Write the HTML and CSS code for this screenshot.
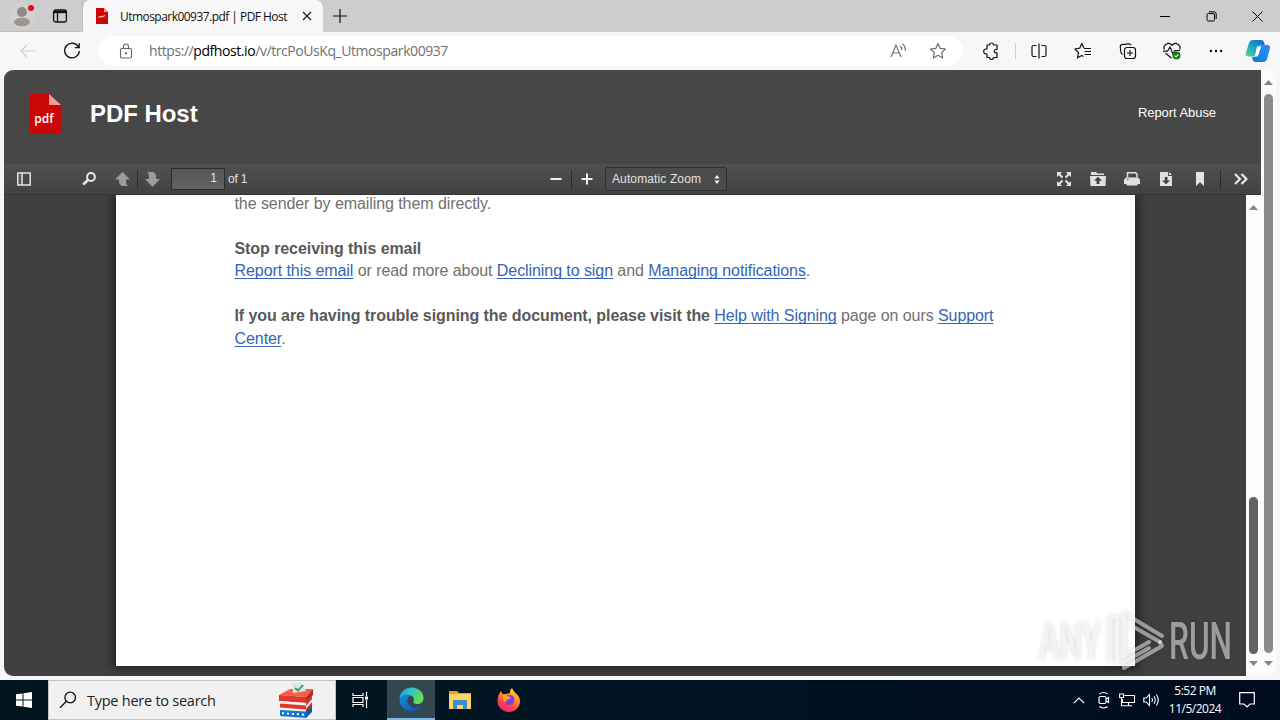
FILE: index.html
```html
<!DOCTYPE html>
<html lang="en">
<head>
<meta charset="UTF-8" />
<meta name="viewport" content="width=device-width, initial-scale=1" />
<title>Utmospark00937.pdf | PDF Host</title>
<link rel="stylesheet" href="styles.css">
</head>
<body>

<!-- tab strip -->
<div class="titlebar">
  <div class="tab-tools">
    <svg class="profile" width="28" height="28" viewBox="0 0 28 28">
      <circle cx="14" cy="14" r="13" fill="#d3d0ce"/>
      <circle cx="14" cy="10" r="5" fill="#8e8b89"/>
      <ellipse cx="14" cy="20" rx="8" ry="4.3" fill="#999694"/>
      <circle cx="23" cy="6" r="3" fill="#e00b1c"/>
    </svg>
    <svg class="workspaces" width="16" height="16" viewBox="0 0 16 16" fill="none" stroke="#111" stroke-width="1.3">
      <rect x="1.6" y="2" width="12.8" height="12" rx="2"/>
      <path d="M2 3.3h12M5.5 5v9" />
      <path d="M2 4.2h12" stroke-width="2"/>
    </svg>
  </div>
  <div class="tab">
    <svg width="14" height="16" viewBox="0 0 14 16">
      <path d="M1 0h8l4 4v12H1z" fill="#cb0606"/>
      <path d="M9 0l4 4H9z" fill="#f79a9a"/>
      <path d="M3.5 9.500l2-1 1.500.3 3-1.300" stroke="#fbb" stroke-width="1.200" fill="none"/>
    </svg>
    <span class="tab-title">Utmospark00937.pdf | PDF Host</span>
    <svg class="tab-close" width="10" height="10" viewBox="0 0 10 10" stroke="#222" stroke-width="1.3"><path d="M1 1l8 8M9 1L1 9"/></svg>
  </div>
  <svg class="new-tab" width="14" height="14" viewBox="0 0 14 14" stroke="#111" stroke-width="1.2"><path d="M7 0v14M0 7h14"/></svg>
  <div class="window-controls">
    <span><svg width="10" height="10" viewBox="0 0 10 10" stroke="#000"><path d="M0 5.5h10"/></svg></span>
    <span><svg width="11" height="11" viewBox="0 0 11 11" fill="none" stroke="#000"><rect x="1" y="2.5" width="7.5" height="7.5" rx="1.5"/><path d="M3 .8h5a2.2 2.2 0 0 1 2.2 2.2v5"/></svg></span>
    <span><svg width="11" height="11" viewBox="0 0 11 11" stroke="#000"><path d="M.5.5l10 10M10.500 .5l-10 10"/></svg></span>
  </div>
</div>

<!-- address bar -->
<div class="navbar">
  <div class="nav-buttons">
    <span><svg width="16" height="14" viewBox="0 0 16 14" fill="none" stroke="#cfcfcf" stroke-width="1.1"><path d="M7 1L1 7l6 6M1 7h15"/></svg></span>
    <span><svg width="18" height="18" viewBox="0 0 18 18" fill="none" stroke="#1b1b1b" stroke-width="1.4"><path d="M15.500 5.200A7.300 7.300 0 1 0 16.300 9M16.200 1.300v4.300h-4.400"/></svg></span>
  </div>
  <div class="address">
    <svg class="lock" width="14" height="16" viewBox="0 0 14 16" fill="none" stroke="#666" stroke-width="1.1"><rect x="1.500" y="5.500" width="11" height="9.500" rx="1.500"/><path d="M4.500 5.500V3.500a2.500 2.500 0 0 1 5 0v2"/><circle cx="7" cy="10.300" r=".6" fill="#666"/></svg>
    <span class="url"><span class="url-part scheme">https://</span><span class="url-part domain">pdfhost.io</span><span class="url-part path">/v/trcPoUsKq_Utmospark00937</span></span>
    <svg class="read-aloud" width="17" height="16" viewBox="0 0 17 16" fill="none" stroke="#707070" stroke-width="1.200"><path d="M1 14L6 2l5 12M2.700 10h6.600M10.300 3q1.800 1.500 1.300 4M12.300 .7q3.500 2.500 2.800 7"/></svg>
    <svg class="star" width="18" height="18" viewBox="0 0 18 18" fill="none" stroke="#666" stroke-width="1.100" stroke-linejoin="round"><path d="M9 1.500l2.200 4.900 5.300.6-3.900 3.600 1.100 5.300L9 13.200l-4.700 2.700 1.100-5.300L1.500 7l5.300-.6z"/></svg>
  </div>
  <div class="nav-tools">
    <span class="ext"><svg width="18" height="18" viewBox="0 0 18 18" fill="none" stroke="#111" stroke-width="1.200" stroke-linejoin="round"><path d="M5 3h2.500a2 2 0 0 1 4 0H15v4.500h-1a1.700 1.700 0 0 0 0 3.400h1V15.500h-3.500a2 2 0 0 1-4 0H5V12H4.200a2.500 2.500 0 1 1 0-5H5z"/></svg></span>
    <i class="divider"></i>
    <span><svg width="18" height="18" viewBox="0 0 18 18" fill="none" stroke="#111" stroke-width="1.200"><path d="M6.500 3.500h-3q-1.500 0-1.500 1.500v8q0 1.500 1.500 1.500h3M11.500 3.500h3q1.500 0 1.500 1.500v8q0 1.500-1.500 1.500h-3M9 1.500v15"/></svg></span>
    <span><svg width="18" height="18" viewBox="0 0 18 18" fill="none" stroke="#111" stroke-width="1.200" stroke-linejoin="round"><path d="M10 6L7.800 1.500 5.700 6.200.8 7l3.700 3.600-1 5.200 4.300-2.400 1.700 1M10 6.500h7M10.500 9.500H17M10.500 12.500H17"/></svg></span>
    <span><svg width="18" height="18" viewBox="0 0 18 18" fill="none" stroke="#111" stroke-width="1.200"><rect x="5.500" y="5.500" width="11" height="11" rx="2.500"/><path d="M11 8v6M8 11h6M3.500 12.500q-1.500-1-1.700-2.800L1.300 5q-.2-2 1.800-2.300l6.200-.9q2-.2 2.800 1.500"/></svg></span>
    <span><svg width="20" height="20" viewBox="0 0 20 20" fill="none" stroke="#111" stroke-width="1.200"><path d="M2.300 8.500C.5 4 6.500.2 10 4.300 13.500.2 19.500 4 17.700 8.500M3.500 12l6 5.200M1 10.200h4.500L8 6l3 7 2-3.500h5"/><circle cx="14.500" cy="14.500" r="4" fill="#107c10" stroke="none"/><path d="M12.600 14.600l1.400 1.300 2.500-2.600" stroke="#fff"/></svg></span>
    <span><svg width="14" height="4" viewBox="0 0 14 4" fill="#111"><circle cx="1.900" cy="2" r="1.200"/><circle cx="7" cy="2" r="1.200"/><circle cx="12.100" cy="2" r="1.200"/></svg></span>
    <span class="copilot"><svg width="26" height="24" viewBox="0 0 26 24">
      <defs>
        <linearGradient id="cpLeft" x1="0" y1="1" x2="1" y2="0"><stop offset="0" stop-color="#5bd98a"/><stop offset=".45" stop-color="#1ba6c4"/><stop offset="1" stop-color="#125fd0"/></linearGradient>
        <linearGradient id="cpRight" x1="0" y1="1" x2="1" y2="0"><stop offset="0" stop-color="#0a74d8"/><stop offset=".6" stop-color="#1e8df0"/><stop offset="1" stop-color="#3d7cf5"/></linearGradient>
      </defs>
      <path d="M8 1h8q2.500 0 3.200 3l.6 2h-3q-3 0-4 3l-1.500 5q-1 3.500-4 3.500H3.500q-3.500 0-2.500-4L4 4Q5 1 8 1z" fill="url(#cpLeft)"/>
      <path d="M18 23h-7q-3 0-3.500-3l-.5-2h1q3 0 4-3.500L13.500 9q1-3 4-3H22q4 0 2.800 4L22 20q-1 3-4 3z" fill="url(#cpRight)"/>
      <path d="M12 7.500h4.200l-2.700 8.500q-.6 1.500-2.200 1.500H9.800z" fill="#fff"/>
    </svg></span>
  </div>
</div>

<!-- page -->
<div class="frame">
  <div class="site">
    <header class="site-header">
      <svg class="logo" width="32" height="41" viewBox="0 0 32 41">
        <path d="M2 0h18l12 11v27q0 2-2 2H2q-2 0-2-2V2q0-2 2-2z" fill="#cb0606"/>
        <path d="M20 0l12 11H20z" fill="#f79a9a"/>
        <text x="15" y="28.500" text-anchor="middle" class="logo-text">pdf</text>
      </svg>
      <h1>PDF Host</h1>
      <a class="report">Report Abuse</a>
    </header>

    <div class="pdf-toolbar">
      <div class="group left">
        <svg class="t-sidebar" width="14" height="14" viewBox="0 0 14 14" fill="none" stroke="#e4e4e4" stroke-width="1.500"><rect x=".8" y="1" width="12.400" height="12"/><path d="M5 1v12"/><path d="M2.500 4h1M2.500 7h1M2.500 10h1" stroke-width="1" stroke="#aaa"/></svg>
        <svg class="t-find" width="14" height="14" viewBox="0 0 14 14" fill="none" stroke="#e8e8e8"><circle cx="9" cy="5" r="3.900" stroke-width="2"/><path d="M6.200 7.800L1.200 12.500" stroke-width="2.600"/></svg>
        <svg class="t-prev" width="15" height="15" viewBox="0 0 15 15" fill="#9c9c9c"><path d="M7.500 0L15 7.500h-4V10q0 2.500 2 4H6.500Q4 12.500 4 10V7.500H0z"/></svg>
        <i class="split"></i>
        <svg class="t-next" width="15" height="15" viewBox="0 0 15 15" fill="#9c9c9c"><path d="M2 0h6.500Q11 1.500 11 4v3h4l-7.500 8L0 7h4V4Q4 1.500 2 0z"/></svg>
        <span class="page-number">1</span>
        <span class="page-count">of 1</span>
      </div>
      <div class="group middle">
        <svg width="12" height="12" viewBox="0 0 12 12" stroke="#f0f0f0" stroke-width="2"><path d="M.5 6h11"/></svg>
        <i class="split"></i>
        <svg width="12" height="12" viewBox="0 0 12 12" stroke="#f0f0f0" stroke-width="2"><path d="M.5 6h11M6 .5v11"/></svg>
        <span class="zoom">Automatic Zoom
          <svg width="6" height="9" viewBox="0 0 6 9" fill="#eee"><path d="M3 0l2.700 3.500H.3zM3 9l2.700-3.500H.3z"/></svg>
        </span>
      </div>
      <div class="group right">
        <span><svg width="14" height="14" viewBox="0 0 14 14" fill="#e4e4e4" stroke="#e4e4e4"><path d="M0 0h5L0 5zM14 0v5L9 0zM0 14V9l5 5zM14 14H9l5-5z" stroke="none"/><path d="M2 2l3.500 3.500M12 2L8.500 5.500M2 12l3.500-3.500M12 12L8.500 8.500" stroke-width="2"/></svg></span>
        <span><svg width="16" height="14" viewBox="0 0 16 14" fill="#e0e0e0"><path d="M1 0h5l1.500 1.500H14V3H1zM0 4h16l-.5 10H.5z"/><path d="M8 4.800l4 4H9.500V12h-3V8.800H4z" fill="#444"/></svg></span>
        <span><svg width="16" height="14" viewBox="0 0 16 14"><path d="M3.500 5.500V.8h8l1.500 1.500v3.200" fill="none" stroke="#e0e0e0" stroke-width="1.500"/><path d="M2 5.500h12l2 2V12h-2.500v1.500h-11V12H0V7.500z" fill="#e0e0e0"/><path d="M3 7.500h1.500" stroke="#444"/></svg></span>
        <span><svg width="12" height="14" viewBox="0 0 12 14"><path d="M0 0h8v4h4v10H0zM9 0l3 3H9z" fill="#e0e0e0"/><path d="M4.800 5h2.700v3.500H10L6 12.300 2 8.500h2.800z" fill="#444"/></svg></span>
        <span><svg width="8" height="14" viewBox="0 0 8 14" fill="#e4e4e4"><path d="M0 0h8v14l-4-3.800L0 14z"/></svg></span>
        <i class="split"></i>
        <span class="t-more"><svg width="14" height="12" viewBox="0 0 14 12" fill="none" stroke="#e8e8e8" stroke-width="2.200"><path d="M1 1l5 5-5 5M7.500 1l5 5-5 5"/></svg></span>
      </div>
    </div>

    <div class="viewer">
      <div class="viewer-canvas">
        <div class="paper">
          <p class="cut">the sender by emailing them directly.</p>
          <p class="gap"><b>Stop receiving this email</b></p>
          <p><a>Report this email</a> or read more about <a>Declining to sign</a> and <a>Managing notifications</a>.</p>
          <p class="gap"><b>If you are having trouble signing the document, please visit the </b><a>Help with Signing</a> page on ours <a>Support</a></p>
          <p><a>Center</a>.</p>
        </div>
      </div>
      <div class="scrollbar inner">
        <svg width="9" height="5" viewBox="0 0 9 5" fill="#858585"><path d="M4.500 0L9 5H0z"/></svg>
        <i class="thumb"></i>
        <svg width="9" height="5" viewBox="0 0 9 5" fill="#858585"><path d="M4.500 5L9 0H0z"/></svg>
      </div>
    </div>
  </div>
  <div class="scrollbar outer">
    <svg width="9" height="5" viewBox="0 0 9 5" fill="#858585"><path d="M4.500 0L9 5H0z"/></svg>
    <i class="thumb"></i>
    <svg width="9" height="5" viewBox="0 0 9 5" fill="#858585"><path d="M4.500 5L9 0H0z"/></svg>
  </div>
</div>

<!-- watermark over the page -->
<svg class="watermark" width="210" height="66" viewBox="0 0 210 66">
  <g fill="#fff" fill-opacity=".5">
    <text x="4" y="51" textLength="62" lengthAdjust="spacingAndGlyphs">ANY</text>
    <text x="134" y="51" textLength="63" lengthAdjust="spacingAndGlyphs">RUN</text>
  </g>
  <g fill="none" stroke="#fff" stroke-opacity=".5" stroke-width="4" stroke-linejoin="round" stroke-linecap="round">
    <path d="M75 52V12q0-3 4-3"/>
    <path d="M82 54V9"/>
    <path d="M125 34L97 18M127 28L89 5v43l25-14"/>
    <path d="M125 34l2 4-38 22v-6l25-14"/>
  </g>
</svg>

<!-- taskbar -->
<div class="taskbar">
  <div class="start"><svg width="16" height="16" viewBox="0 0 16 16" fill="#fff"><path d="M0 2.300l6.500-.9v6.100H0zM7.500 1.200L16 0v7.500H7.500zM0 8.500h6.500v6.100L0 13.700zM7.500 8.500H16V16l-8.500-1.200z"/></svg></div>
  <div class="search">
    <svg width="18" height="18" viewBox="0 0 18 18" fill="none" stroke="#111" stroke-width="1.300"><circle cx="11.200" cy="6.500" r="5.300"/><path d="M7.400 10.300L1 16.700"/></svg>
    <span>Type here to search</span>
    <svg class="ballot" width="36" height="38" viewBox="0 0 36 38">
      <path d="M1 14l11-6h23l-7 8z" fill="#f0604d"/>
      <path d="M1 14l27 2v6L1 20z" fill="#e2382c"/>
      <path d="M28 16l7-8v6l-7 8z" fill="#b92a23"/>
      <path d="M2 20l26 2v14L2 34z" fill="#f4f4f4"/>
      <path d="M2 22.500l26 2v4l-26-2z" fill="#e2382c"/>
      <path d="M28 22l6-7v12l-6 8z" fill="#c8332b"/>
      <path d="M28 25l6-7v3l-6 7z" fill="#eee"/>
      <path d="M2 29l26 1.500V37L2 35z" fill="#1476d1"/>
      <path d="M28 30.500l6-6V31l-6 6z" fill="#0d5cab"/>
      <path d="M4 32.200l22 1.500" stroke="#fff" stroke-width="2" stroke-dasharray="2 3"/>
      <path d="M14 3l10-2 4 9-13 2z" fill="#dfe5e2"/>
      <path d="M17 7l3 2.500L25 4" fill="none" stroke="#2e9d57" stroke-width="1.800"/>
    </svg>
  </div>
  <div class="task view"><svg width="17" height="18" viewBox="0 0 17 18" fill="none" stroke="#fff" stroke-width="1.200"><path d="M1 2v2.500h10V2M1 16v-2.500h10V16M1 6.500h10v5H1zM14.500 1v4M14.500 9v8"/><path d="M13 5.500h3v3h-3z" fill="#fff" stroke="none"/></svg></div>
  <div class="task active"><svg width="25" height="25" viewBox="0 0 25 25">
    <defs>
      <linearGradient id="edgeTop" x1="0" y1="0" x2="1" y2=".4"><stop offset="0" stop-color="#1c9fe0"/><stop offset=".5" stop-color="#2fc3c8"/><stop offset="1" stop-color="#67df54"/></linearGradient>
      <linearGradient id="edgeLow" x1="0" y1="0" x2="1" y2="1"><stop offset="0" stop-color="#1a8fe0"/><stop offset="1" stop-color="#0f4fa3"/></linearGradient>
    </defs>
    <path d="M.5 12C1 5 6 .5 12.500.5 19 .5 24.500 5 24.500 11c0 4-3 6-6 6-3.500 0-4.500-1.500-4-2.500 1-1 1-5-3-6C7 7 2 9 .5 12z" fill="url(#edgeTop)"/>
    <path d="M.5 12C2 8 8 6.500 11.500 8.500 8 10 7.500 15 10 18c3 3.500 8 3.500 12 1.500-2 3-5.500 5-9.500 5C6 24.500.500 19 .5 12z" fill="url(#edgeLow)"/>
  </svg></div>
  <div class="task"><svg width="22" height="20" viewBox="0 0 22 20"><path d="M0 1h8l2 2h12v16H0z" fill="#e9a21b"/><path d="M0 4h22v15H0z" fill="#fcd462"/><path d="M4 19v-8q0-1 1-1h12q1 0 1 1v8h-4v-4H8v4z" fill="#3d8fd4"/></svg></div>
  <div class="task"><svg width="24" height="24" viewBox="0 0 24 24">
    <defs><linearGradient id="fox" x1=".8" y1="0" x2=".3" y2="1"><stop offset="0" stop-color="#ffe23a"/><stop offset=".4" stop-color="#ff8f20"/><stop offset=".75" stop-color="#ff3b53"/><stop offset="1" stop-color="#e62a86"/></linearGradient></defs>
    <path d="M4 3l1.500 3L9 6l4-1q-.5-3 2-5 1 3 4 5.500 4 3 4 8C23 19 18 24 12 24S.5 19 .5 13.500Q.500 7 4 3z" fill="url(#fox)"/>
    <circle cx="12.500" cy="12" r="5" fill="#7c3fe0"/>
    <path d="M5.500 8q3-1.500 6 .5l2.500 1q-1.500 2-3.500 2-2 1-1 3-4-1-4-6.500z" fill="#ffa22a"/>
  </svg></div>
  <div class="tray">
    <svg class="chev" width="12" height="7" viewBox="0 0 12 7" fill="none" stroke="#fff" stroke-width="1.200"><path d="M.8 6.200L6 1l5.200 5.200"/></svg>
    <svg class="meet" width="14" height="18" viewBox="0 0 14 18" fill="none" stroke="#fff" stroke-width="1.200"><rect x="2" y="5.500" width="7" height="7" rx="1.500"/><path d="M9 8l2.500-1.500v5L9 10M2.500 3Q6.500 0 10.500 3M2.500 15.500q4 3 8 0"/></svg>
    <svg class="net" width="16" height="14" viewBox="0 0 16 14" fill="none" stroke="#fff" stroke-width="1.100"><path d="M5.500 2.500h10v7H3.500V6M9.500 9.500v3M6 12.800h7"/><path d="M.6 1h4v3.500h-4zM2.500 4.500v8.300H6"/></svg>
    <svg class="vol" width="17" height="14" viewBox="0 0 17 14" fill="none" stroke="#fff" stroke-width="1.100"><path d="M.8 5h2.500L6.500 1.500v11L3.300 9H.8zM8.800 5q1.300 2 0 4M11 3.200q2.600 3.800 0 7.600M13.300 1.500q4 5.500 0 11"/></svg>
    <div class="clock"><span>5:52 PM</span><span class="date">11/5/2024</span></div>
    <svg class="notes" width="16" height="16" viewBox="0 0 16 16" fill="none" stroke="#fff" stroke-width="1.200"><path d="M.7.700h14.600V12H11l-3 3-3-3H.7z"/></svg>
  </div>
</div>
</body>
</html>
```
FILE: styles.css
```css
* {
  box-sizing: border-box;
}
body {
  margin: 0;
  width: 1280px;
  height: 720px;
  overflow: hidden;
  background: #f5f6f8;
  font-family: "Open Sans", "Noto Sans", sans-serif;
  display: flex;
  flex-direction: column;
}
svg {
  display: block;
  flex: none;
}
h1,
p {
  margin: 0;
}

/* tab strip */
.titlebar {
  height: 32px;
  flex: none;
  background: #cdcdcd;
  display: flex;
  align-items: center;
}
.tab-tools {
  width: 83px;
  height: 32px;
  display: flex;
  align-items: center;
  padding-left: 8px;
  gap: 16px;
  border-bottom: 1px solid #bdbdbd;
  border-right: 1px solid #bdbdbd;
  border-radius: 0 0 5px 0;
}
.profile {
  margin-top: 1px;
}
.tab {
  width: 240px;
  height: 32px;
  background: #f7f7f7;
  border-radius: 8px 8px 0 0;
  display: flex;
  align-items: center;
  padding-left: 12px;
}
.tab-title {
  width: 187px;
  padding-left: 11px;
  font-size: 12px;
  letter-spacing: -0.54px;
  color: #111;
  white-space: nowrap;
}
.tab-close {
  margin-left: 6px;
}
.new-tab {
  margin-left: 10px;
}
.window-controls {
  margin-left: auto;
  display: flex;
}
.window-controls span {
  width: 46px;
  display: flex;
  justify-content: center;
}

/* address bar */
.navbar {
  height: 38px;
  flex: none;
  background: #f7f7f7;
  display: flex;
  align-items: center;
}
.nav-buttons {
  display: flex;
  width: 99px;
  padding-left: 6px;
}
.nav-buttons span {
  width: 44px;
  display: flex;
  align-items: center;
  justify-content: center;
}
.address {
  width: 864px;
  height: 30px;
  border-radius: 15px;
  background: #fff;
  display: flex;
  align-items: center;
  padding: 0 16px 0 20px;
}
.url {
  margin-left: 16px;
  padding-bottom: 1px;
  font-size: 14px;
  color: #707070;
  white-space: nowrap;
}
.url-part {
  letter-spacing: -0.43px;
}
.domain {
  color: #000;
}
.read-aloud {
  margin-left: auto;
  margin-right: 22px;
}
.nav-tools {
  display: flex;
  align-items: center;
  flex: 1;
}
.nav-tools span {
  width: 44.300px;
  display: flex;
  justify-content: center;
}
.nav-tools .ext {
  width: 52px;
  padding-left: 4px;
}
.nav-tools .divider {
  width: 1px;
  height: 16px;
  margin-right: 1px;
  background: #cfcfcf;
}
.nav-tools .copilot {
  width: 40px;
}

/* page frame */
.frame {
  height: 606px;
  flex: none;
  margin: 0 4px 4px;
  border-radius: 9px;
  overflow: hidden;
  display: flex;
  background: #fcfcfc;
}
.site {
  width: 1257px;
  display: flex;
  flex-direction: column;
  font-family: "Liberation Sans", Arial, sans-serif;
}
.site-header {
  height: 94px;
  background: #474747;
  display: flex;
  align-items: center;
  padding: 0 45px 6px 25px;
  color: #fff;
}
.logo-text {
  font: 600 12px "Open Sans", sans-serif;
  fill: #fff;
}
.site-header h1 {
  margin-left: 29px;
  font-size: 24px;
  letter-spacing: -0.05px;
}
.report {
  margin-left: auto;
  padding-bottom: 3px;
  font-size: 13px;
  letter-spacing: -0.06px;
}

/* pdf viewer toolbar */
.pdf-toolbar {
  height: 31px;
  background: linear-gradient(#505050, #424242);
  border-bottom: 1px solid #333;
  display: flex;
  align-items: center;
  color: #e3e3e3;
  font-size: 12px;
}
.group {
  display: flex;
  align-items: center;
}
.left {
  width: 535px;
  padding-left: 13px;
}
.split {
  width: 1px;
  height: 19px;
  background: #2c2c2c;
}
.t-find {
  margin-left: 51px;
}
.t-prev {
  margin: 0 7px 0 19px;
}
.t-next {
  margin: 0 11px 0 7px;
}
.page-number {
  width: 54px;
  height: 22px;
  border: 1px solid #2b2b2b;
  background: linear-gradient(#575757, #626262);
  line-height: 19px;
  text-align: right;
  padding-right: 7px;
}
.page-count {
  margin-left: 3px;
  padding-bottom: 1px;
  letter-spacing: -0.2px;
}
.middle {
  padding-left: 11px;
  gap: 9px;
}
.zoom {
  width: 122px;
  height: 24px;
  margin-left: 3px;
  border: 1px solid #2e2e2e;
  border-radius: 2px;
  background: #4b4b4b;
  display: flex;
  align-items: center;
  justify-content: space-between;
  padding: 0 6px;
  letter-spacing: 0.12px;
  white-space: nowrap;
}
.right {
  margin-left: auto;
}
.right span {
  width: 34px;
  display: flex;
  justify-content: center;
}
.right .split {
  margin-left: 3px;
}
.right .t-more {
  width: 40px;
}

/* document */
.viewer {
  flex: 1;
  display: flex;
  min-height: 0;
}
.viewer-canvas {
  width: 1242px;
  padding-left: 112px;
  background: #404040;
  overflow: hidden;
}
.paper {
  width: 1019px;
  height: 471px;
  background: #fff;
  box-shadow: 0 0 10px 3px rgba(0, 0, 0, 0.5);
  padding-left: 118.500px;
  font-size: 16px;
  line-height: 22.500px;
  letter-spacing: -0.073px;
  color: #707070;
}
.paper p {
  white-space: pre;
}
.paper .cut {
  height: 20px;
  line-height: 17px;
}
.paper .gap {
  padding-top: 22.500px;
}
.paper b {
  color: #595959;
}
.paper a {
  color: #3465b3;
  text-decoration: underline;
  text-decoration-thickness: 1px;
  text-underline-offset: 2px;
  text-decoration-skip-ink: none;
}

/* scrollbars */
.scrollbar {
  width: 15px;
  background: #fcfcfc;
  display: flex;
  flex-direction: column;
  align-items: center;
  padding: 10px 0;
}
.thumb {
  width: 9px;
  border-radius: 5px;
  background: #8b8b8b;
}
.outer .thumb {
  height: 559px;
  margin: 9px 0 8px;
}
.inner .thumb {
  height: 157px;
  margin: 287px 0 7px;
  background: #636363;
}

.watermark {
  position: absolute;
  left: 1035px;
  top: 608px;
  filter: drop-shadow(0 0 2px rgba(0, 0, 0, 0.3));
}
.watermark text {
  font: 500 51px/1 Roboto, sans-serif;
}

/* taskbar */
.taskbar {
  height: 40px;
  flex: none;
  background: linear-gradient(90deg, #00141d, #001522 50%, #000b1e);
  color: #fff;
  display: flex;
}
.start {
  width: 48px;
  display: flex;
  align-items: center;
  justify-content: center;
}
.search {
  width: 288px;
  background: #f1f1f1;
  border: 1px solid #c4c4c4;
  color: #222;
  font-size: 14.500px;
  display: flex;
  align-items: center;
  padding-left: 10px;
  white-space: nowrap;
}
.search span {
  margin-left: 10px;
  letter-spacing: -0.25px;
}
.ballot {
  margin-left: auto;
  margin-right: 21px;
}
.task {
  width: 49px;
  display: flex;
  align-items: center;
  justify-content: center;
}
.task.view {
  width: 51px;
  padding-right: 3px;
}
.task.active {
  width: 48px;
  background: #34474e;
  border-bottom: 2px solid #76b9ed;
}
.tray {
  margin-left: auto;
  width: 207px;
  display: flex;
  align-items: center;
}
.meet {
  margin-left: 12px;
}
.net {
  margin-left: 8px;
}
.vol {
  margin-left: 8px;
}
.clock {
  width: 60px;
  margin-left: 5px;
  font-size: 12px;
  line-height: 18px;
  display: flex;
  flex-direction: column;
  align-items: center;
  white-space: nowrap;
  letter-spacing: -0.5px;
}
.notes {
  margin-left: 14px;
}
```
